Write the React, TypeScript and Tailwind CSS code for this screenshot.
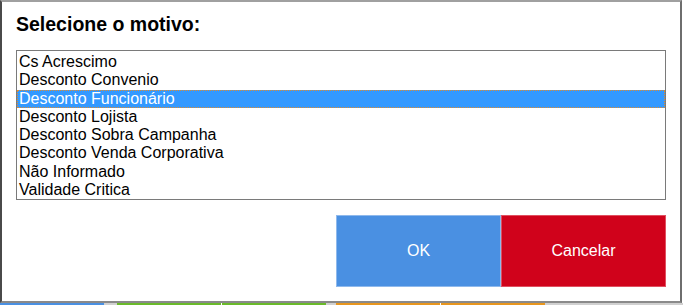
const motivos = [
  'Cs Acrescimo',
  'Desconto Convenio',
  'Desconto Funcionário',
  'Desconto Lojista',
  'Desconto Sobra Campanha',
  'Desconto Venda Corporativa',
  'Não Informado',
  'Validade Critica',
];

export default function App() {
  const selected = 2;

  return (
    <div className="w-[683px] h-[305px] bg-white overflow-hidden font-['Liberation_Sans',Arial,sans-serif]">
      <div className="w-[682px] h-[303px] border-l-2 border-r-2 border-b-2 border-t-2 border-l-[#4a4a4a] border-r-[#6e6e6e] border-b-[#8a8a8a] border-t-[#a0a0a0] bg-white pl-[14px] pr-[14px] flex flex-col">
        <h1 className="mt-[10px] h-[24px] text-[19.5px] leading-[24px] font-bold text-black">Selecione o motivo:</h1>
        <div className="mt-[14px] w-[650px] h-[150px] border border-[#7a7a7a] bg-white pt-[2px]">
          {motivos.map((m, i) => (
            <div
              key={m}
              className={
                i === selected
                  ? 'h-[18.3px] leading-[18.3px] text-[16px] px-[2px] bg-[#3399ff] text-white outline-1 outline-dotted outline-[#e08a2c] -outline-offset-1'
                  : 'h-[18.3px] leading-[18.3px] text-[16px] px-[2px] text-black'
              }
            >
              {m}
            </div>
          ))}
        </div>
        <div className="mt-[15px] flex justify-end">
          <button className="w-[165px] h-[72px] bg-[#4a90e2] border border-[#8fb9ec] text-white text-[16px]">OK</button>
          <button className="w-[165px] h-[72px] bg-[#d0021b] border border-[#e05060] text-white text-[16px]">Cancelar</button>
        </div>
      </div>
      <div className="flex h-[2px]">
        <div className="w-[104px] bg-[#4a90e2]" />
        <div className="w-[13px] bg-[#d0d0d0]" />
        <div className="w-[104px] bg-[#6aba2a]" />
        <div className="w-[1px] bg-white" />
        <div className="w-[104px] bg-[#6aba2a]" />
        <div className="w-[10px] bg-[#d0d0d0]" />
        <div className="w-[104px] bg-[#e8961e]" />
        <div className="w-[1px] bg-white" />
        <div className="w-[104px] bg-[#e8961e]" />
        <div className="flex-1 bg-[#d0d0d0]" />
      </div>
    </div>
  );
}
